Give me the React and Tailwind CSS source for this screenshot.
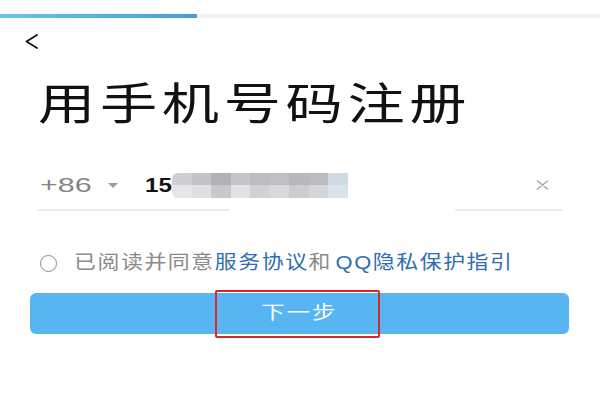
const BLUR_TOP = ["#cfcfd3", "#c4c4c8", "#b1b1b6", "#c6c6ca", "#bdbdc1", "#c0c0c4", "#b8b8bc", "#bcbcc0", "#cfdbe2"];
const BLUR_BOTTOM = ["#e6e6e8", "#e0e0e2", "#c9c9cc", "#e3e3e5", "#d2d2d5", "#dadadc", "#cdcdd0", "#d6d6d9", "#d9e4ea"];

function BackIcon() {
  return (
    <svg width="15" height="17" viewBox="0 0 15 17" fill="none">
      <polyline points="13,2 2.5,8.5 13,15" stroke="#111" strokeWidth="1.8" strokeLinecap="round" strokeLinejoin="round" />
    </svg>
  );
}

function ClearIcon() {
  return (
    <svg width="13" height="10" viewBox="0 0 13 10" fill="none">
      <path d="M1.5 1 L11.5 9 M11.5 1 L1.5 9" stroke="#a0a0a0" strokeWidth="1.3" strokeLinecap="round" />
    </svg>
  );
}

export default function App() {
  return (
    <div
      className="w-[600px] h-[420px] overflow-hidden bg-white"
      style={{ fontFamily: '"Liberation Sans", "Noto Sans CJK SC", sans-serif' }}
    >
      {/* progress strip */}
      <div className="h-[14px]" />
      <div className="flex h-[4px]">
        <div className="w-[197px] bg-gradient-to-r from-[#62c6ee] to-[#4a9be0]" />
        <div className="flex-1 bg-[#f1f1f1]" />
      </div>

      {/* back */}
      <div className="pl-[24px] pt-[15px]">
        <BackIcon />
      </div>

      {/* title */}
      <h1 className="mt-[33px] pl-[38px] h-[44px] text-[44px] leading-[44px] text-[#111] font-normal">
        <span className="inline-block origin-left scale-x-[1.3] tracking-[3.6px] whitespace-nowrap">用手机号码注册</span>
      </h1>

      {/* phone input */}
      <div className="mt-[44px] flex h-[28px] items-center pl-[40px] pr-[51px]">
        <span className="inline-block origin-left scale-x-[1.45] text-[21px] text-[#858585]">+86</span>
        <span className="ml-[32px] h-0 w-0 border-x-[5px] border-t-[5px] border-x-transparent border-t-[#9a9a9a]" />
        <span className="ml-[27px] inline-block origin-left scale-x-[1.15] text-[21px] font-bold text-[#111]">15</span>
        <div className="ml-[4px] grid h-[25px] w-[176px] grid-cols-9 overflow-hidden rounded-l-[6px]">
          {BLUR_TOP.map((c, i) => (
            <div key={`t${i}`} style={{ backgroundColor: c }} />
          ))}
          {BLUR_BOTTOM.map((c, i) => (
            <div key={`b${i}`} style={{ backgroundColor: c }} />
          ))}
        </div>
        <div className="flex-1" />
        <ClearIcon />
      </div>
      <div className="mt-[10px] flex h-[2px]">
        <div className="ml-[37px] w-[193px] bg-[#ededed]" />
        <div className="ml-[225px] w-[107px] bg-[#ededed]" />
      </div>

      {/* agreement */}
      <div className="mt-[40px] flex h-[24px] items-center pl-[40px]">
        <span className="h-[17px] w-[17px] shrink-0 rounded-full border-[1.5px] border-[#8c8c8c]" />
        <p className="ml-[17px] inline-block origin-left scale-x-[1.15] whitespace-nowrap text-[19px] leading-[24px] tracking-[1.4px] text-[#8a8a8a]">
          已阅读并同意<span className="text-[#2e6db4]">服务协议</span>和<span className="ml-[3px] text-[#2e6db4]">QQ隐私保护指引</span>
        </p>
      </div>

      {/* next button */}
      <div className="relative mt-[18px] ml-[30px] w-[539px]">
        <button className="flex h-[41px] w-full items-center justify-center rounded-[6px] bg-[#57b6f1] text-[18px] text-white">
          <span className="inline-block scale-x-[1.3] tracking-[1.5px]">下一步</span>
        </button>
        <div className="absolute left-[185px] top-[-3px] h-[48px] w-[165px] rounded-[2px] border-2 border-[#d7292a]" />
      </div>
    </div>
  );
}
